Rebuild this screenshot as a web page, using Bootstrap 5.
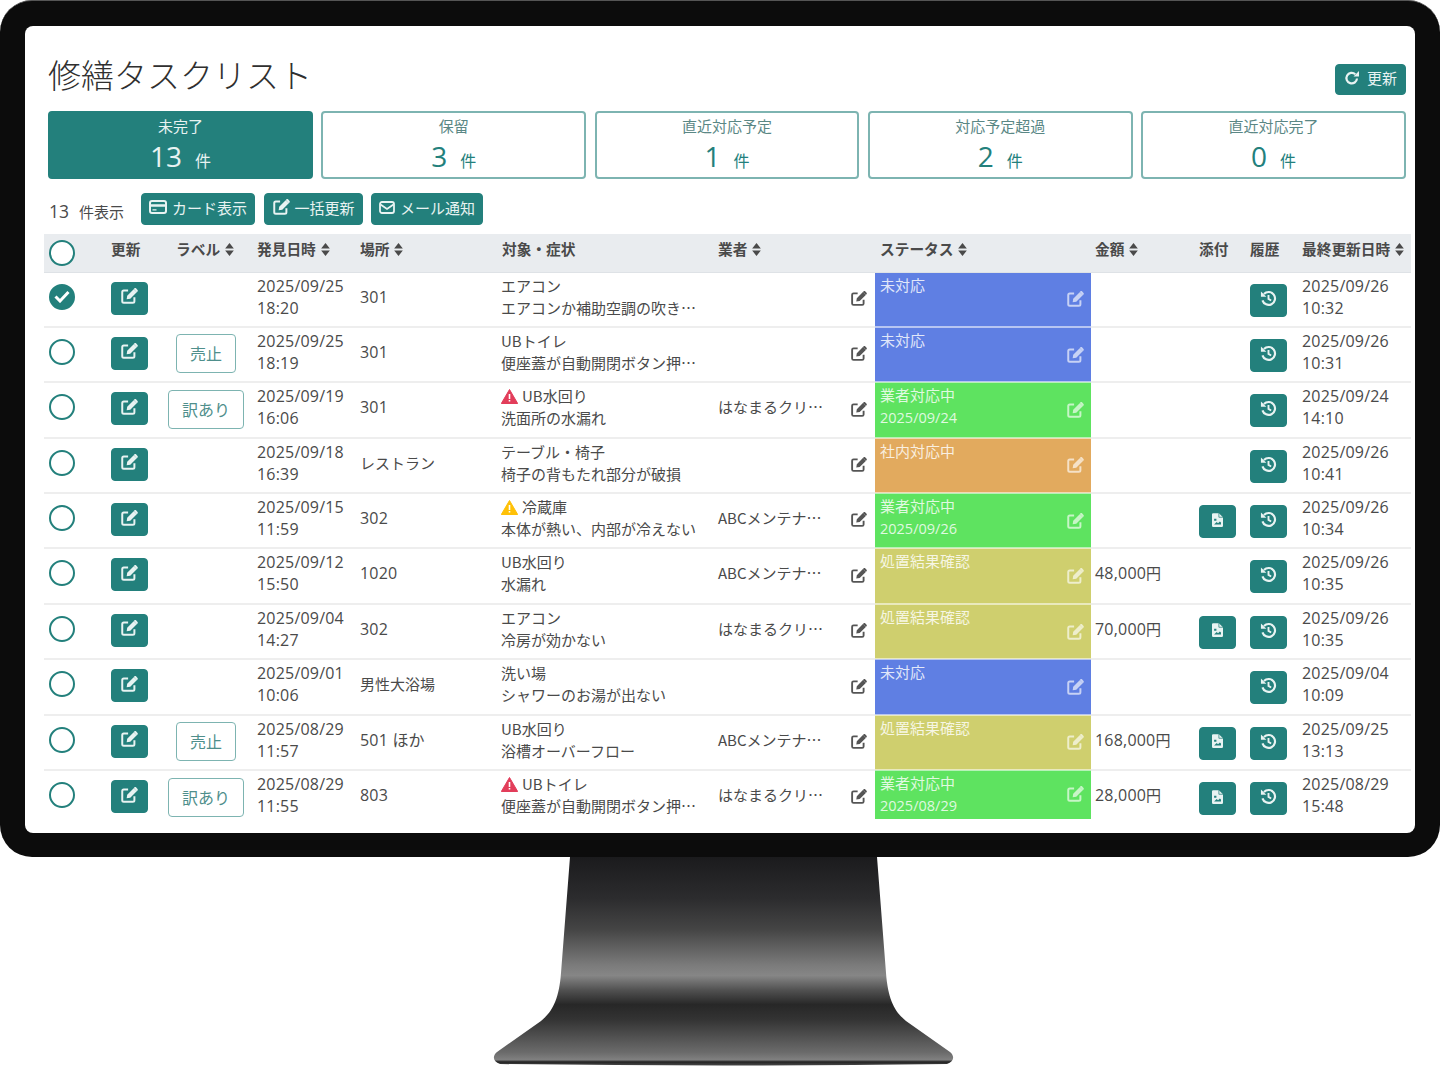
<!DOCTYPE html>
<html lang="ja">
<head>
    <meta charset="UTF-8">
    <title>修繕タスクリスト</title>
    <link href="https://cdn.jsdelivr.net/npm/bootstrap@5.3.2/dist/css/bootstrap.min.css" rel="stylesheet">
    <style>
        html, body { height: 100%; margin: 0; overflow: hidden; background: #fff; }
        body { font-family: "Noto Sans CJK JP", sans-serif; font-size: 15px; color: #4a4a4a; }
        .num { font-family: "Open Sans", "Noto Sans CJK JP", sans-serif; font-size: 16px; letter-spacing: .2px; }

        .monitor-frame { height: 857px; padding: 25px 25px 24px; background: #0c0c0c; border-radius: 32px; border-top: 1px solid #555; }
        .monitor-screen { height: 807px; padding: 0 9px 0 23px; background: #fff; border-radius: 8px; overflow: hidden; }
        .monitor-stand { display: block; width: 1440px; height: 213px; }

        .title-row { height: 85px; padding-top: 23px; }
        .page-title { font-size: 33px; font-weight: 300; line-height: 50px; margin: 0; color: #2f2f2f; }
        .btn-teal { --bs-btn-color: #e8f3f2; --bs-btn-bg: #23807c; --bs-btn-border-color: #23807c; --bs-btn-hover-color: #fff; --bs-btn-hover-bg: #1c6c69; --bs-btn-hover-border-color: #1c6c69; --bs-btn-font-size: 15px; --bs-btn-border-radius: 4px; --bs-btn-padding-x: 7px; --bs-btn-padding-y: 0; height: 32px; padding-bottom: 4px; display: inline-flex; align-items: center; gap: 5px; line-height: 1; }
        .refresh-btn { margin-top: 15px; height: 31px; gap: 7px; width: 71px; justify-content: center; }

        .stat-grid { display: grid; grid-template-columns: repeat(5, 1fr); gap: 8.5px; }
        .stat-box { height: 68px; border: 2px solid #7db4b1; border-radius: 4px; text-align: center; color: #5a8785; padding-top: 2px; }
        .stat-box.is-active { background: #23807c; border-color: #23807c; color: #e8f3f2; }
        .stat-label { line-height: 22px; }
        .stat-value { font-family: "Open Sans", sans-serif; font-size: 28px; line-height: 34px; margin-top: 2px; color: #23807c; }
        .is-active .stat-value { color: #e8f3f2; }
        .stat-unit { font-family: "Noto Sans CJK JP", sans-serif; font-size: 16px; margin-left: 13px; }

        .toolbar { height: 55px; padding-top: 14px; align-items: flex-start; gap: 8.5px; }
        .count-text { width: 84.5px; padding-top: 6px; line-height: 24px; margin-left: 1px; margin-right: -1px; white-space: nowrap; }
        .count-num { font-family: "Open Sans", sans-serif; font-size: 17.5px; margin-right: 10px; }

        .task-wrap { margin: 0 -5px 0 -4px; }
        .task-table { table-layout: fixed; width: 1367px; margin: 0; border-collapse: collapse; --bs-table-color: #4a4a4a; }
        .task-table col:nth-child(1) { width: 62px; }
        .task-table col:nth-child(2) { width: 58px; }
        .task-table col:nth-child(3) { width: 89px; }
        .task-table col:nth-child(4) { width: 103px; }
        .task-table col:nth-child(5) { width: 141px; }
        .task-table col:nth-child(6) { width: 217px; }
        .task-table col:nth-child(7) { width: 132px; }
        .task-table col:nth-child(8) { width: 29px; }
        .task-table col:nth-child(9) { width: 216px; }
        .task-table col:nth-child(10) { width: 104px; }
        .task-table col:nth-child(11) { width: 51px; }
        .task-table col:nth-child(12) { width: 52px; }
        .task-table col:nth-child(13) { width: 113px; }
        .task-table th { height: 38px; padding: 0 0 8px 4px; background: #e9ecef; font-weight: 700; font-size: 14.7px; color: #4a4a4a; white-space: nowrap; vertical-align: middle; border-bottom: 1px solid #dee2e6; }
        .task-table td { padding: 2px 0 7.4px 4px; line-height: 22px; vertical-align: middle; white-space: nowrap; border-bottom: 2px solid #eee; box-shadow: none; }
        .task-table tbody tr:last-child td { padding-bottom: 2px; border-bottom: 0; }
        .task-table td.status-cell { padding: 0; vertical-align: top; background: var(--status-bg); --bs-table-bg: var(--status-bg); border-bottom-color: rgba(255,255,255,.55); }
        .task-table th.th-wide { padding-left: 5px; }
        .task-table th.th-label { padding-left: 12px; }
        .task-table th.th-check { padding: 0 0 0 5px; }
        .task-table td.cell-first { padding-left: 5px; }
        .task-table td.cell-label { padding-left: 0; padding-right: 5px; text-align: center; }

        .status-blue { --status-bg: #5f7fe3; }
        .status-green { --status-bg: #5ee360; }
        .status-orange { --status-bg: #e2aa5e; }
        .status-yellow { --status-bg: #cfcf6e; }
        .status-inner { height: 53.4px; padding: 0 7px 0 5px; display: flex; justify-content: space-between; align-items: center; color: rgba(255,255,255,.82); }
        .status-inner svg { color: rgba(255,255,255,.65); }
        .task-table tbody tr:last-child .status-inner { height: 46px; }
        .status-text { align-self: flex-start; line-height: 22px; padding-top: 1px; }
        .status-date { font-size: 14.5px; font-family: "Open Sans", sans-serif; }

        .circle-check { width: 26px; height: 26px; border: 2px solid #23807c; border-radius: 50%; display: block; background: #fff; }
        .circle-check.is-on { background: #23807c; display: flex; align-items: center; justify-content: center; }
        .icon-btn { --bs-btn-padding-x: 0; width: 36.5px; height: 33px; justify-content: center; }
        .edit-btn { margin-top: 3px; }
        .side-btn { margin-top: 7px; }
        .tag-box { display: inline-block; border: 1.5px solid #7db4b1; border-radius: 4px; color: #4f8f8c; padding: 0 13px; height: 39px; line-height: 36px; font-size: 16px; margin-top: 4px; }
        .sort-mark { width: 9px; height: 13px; margin-left: 5px; vertical-align: -1px; }
        .pen-dark { color: #555; }
        .warn-mark { vertical-align: -2px; margin-right: 4px; }
    </style>
</head>
<body>
    <svg width="0" height="0" class="position-absolute">
        <symbol id="i-edit" viewBox="0 0 20 20">
            <path d="M9 4H4.2A1.7 1.7 0 0 0 2.5 5.7v10.1a1.7 1.7 0 0 0 1.7 1.7h10.1a1.7 1.7 0 0 0 1.7-1.7V11.5" fill="none" stroke="currentColor" stroke-width="2.2"/>
            <path d="M8 9.6 15.2 2.4l3.4 3.4-7.2 7.2-4 .6zM16.1 1.5c.5-.5 1.2-.5 1.7 0l1.7 1.7c.5.5.5 1.2 0 1.7l-.8.8-3.4-3.4z" fill="currentColor"/>
        </symbol>
        <symbol id="i-hist" viewBox="0 0 18 18">
            <path d="M4.2 4.2A6.8 6.8 0 1 1 2.6 11" fill="none" stroke="currentColor" stroke-width="2.3"/>
            <path d="M1 1.5v5.7h5.7z" fill="currentColor"/>
            <path d="M9 5.2v4.2l2.8 1.7" fill="none" stroke="currentColor" stroke-width="2"/>
        </symbol>
        <symbol id="i-file" viewBox="0 0 12 15">
            <path d="M1.3 0H7.5L12 4.5v9.2A1.3 1.3 0 0 1 10.700 15H1.3A1.300 1.300 0 0 1 0 13.700V1.300A1.300 1.300 0 0 1 1.300 0z" fill="currentColor"/>
            <path d="M2.300 6h2.500v2.300H2.300zM2.300 12.500l2.800-2.800 1.500 1.300 2-2 1.200 1.200v2.300z" fill="#23807c"/>
            <path d="M7.500 0v4.500H12" fill="none" stroke="#23807c" stroke-width=".8"/>
        </symbol>
        <symbol id="i-sort" viewBox="0 0 8 12">
            <path d="M4 0 8 5H0zM4 12 0 7h8z" fill="currentColor"/>
        </symbol>
    </svg>

    <div class="monitor-frame">
        <div class="monitor-screen">
            <div class="title-row d-flex justify-content-between align-items-start">
                <h1 class="page-title">修繕タスクリスト</h1>
                <button type="button" class="btn btn-teal refresh-btn">
                    <svg width="16" height="16" viewBox="0 0 16 16"><path d="M13 8.500A5.300 5.300 0 1 1 11.300 4.200" fill="none" stroke="currentColor" stroke-width="2.200"/><path d="M15 1v5.500H9.500z" fill="currentColor"/></svg>
                    更新
                </button>
            </div>

            <div class="stat-grid">
                <div class="stat-box is-active"><div class="stat-label">未完了</div><div class="stat-value">13<span class="stat-unit">件</span></div></div>
                <div class="stat-box"><div class="stat-label">保留</div><div class="stat-value">3<span class="stat-unit">件</span></div></div>
                <div class="stat-box"><div class="stat-label">直近対応予定</div><div class="stat-value">1<span class="stat-unit">件</span></div></div>
                <div class="stat-box"><div class="stat-label">対応予定超過</div><div class="stat-value">2<span class="stat-unit">件</span></div></div>
                <div class="stat-box"><div class="stat-label">直近対応完了</div><div class="stat-value">0<span class="stat-unit">件</span></div></div>
            </div>

            <div class="toolbar d-flex">
                <div class="count-text"><span class="count-num">13</span>件表示</div>
                <button type="button" class="btn btn-teal">
                    <svg width="18" height="14" viewBox="0 0 18 14"><rect x="1" y="1" width="16" height="12" rx="2" fill="none" stroke="currentColor" stroke-width="2"/><path d="M1 4.200h16v2.600H1zM3.500 9.200h4v1.300h-4z" fill="currentColor"/></svg>
                    カード表示
                </button>
                <button type="button" class="btn btn-teal">
                    <svg width="18" height="18"><use href="#i-edit"/></svg>
                    一括更新
                </button>
                <button type="button" class="btn btn-teal">
                    <svg width="16" height="13" viewBox="0 0 16 13"><rect x="1" y="1" width="14" height="11" rx="2" fill="none" stroke="currentColor" stroke-width="1.800"/><path d="M1.500 3.500 8 8l6.500-4.500" fill="none" stroke="currentColor" stroke-width="1.800"/></svg>
                    メール通知
                </button>
            </div>

            <div class="task-wrap">
                <table class="table task-table">
                    <colgroup><col><col><col><col><col><col><col><col><col><col><col><col><col></colgroup>
                    <thead>
                        <tr>
                            <th class="th-check"><span class="circle-check"></span></th>
                            <th class="th-wide">更新</th>
                            <th class="th-label">ラベル<svg class="sort-mark"><use href="#i-sort"/></svg></th>
                            <th>発見日時<svg class="sort-mark"><use href="#i-sort"/></svg></th>
                            <th>場所<svg class="sort-mark"><use href="#i-sort"/></svg></th>
                            <th class="th-wide">対象・症状</th>
                            <th>業者<svg class="sort-mark"><use href="#i-sort"/></svg></th>
                            <th></th>
                            <th class="th-wide">ステータス<svg class="sort-mark"><use href="#i-sort"/></svg></th>
                            <th>金額<svg class="sort-mark"><use href="#i-sort"/></svg></th>
                            <th>添付</th>
                            <th>履歴</th>
                            <th>最終更新日時<svg class="sort-mark"><use href="#i-sort"/></svg></th>
                        </tr>
                    </thead>
                    <tbody id="taskBody"></tbody>
                </table>
            </div>
        </div>
    </div>

    <svg class="monitor-stand" viewBox="0 857 1440 213">
        <defs>
            <linearGradient id="standFill" x1="0" y1="857" x2="0" y2="1065" gradientUnits="userSpaceOnUse">
                <stop offset="0" stop-color="#1b1b1d"/>
                <stop offset=".2" stop-color="#2c2c2e"/>
                <stop offset=".35" stop-color="#454545"/>
                <stop offset=".52" stop-color="#7b7b7b"/>
                <stop offset=".57" stop-color="#868686"/>
                <stop offset=".64" stop-color="#515151"/>
                <stop offset=".71" stop-color="#272727"/>
                <stop offset=".78" stop-color="#333"/>
                <stop offset=".94" stop-color="#6b6b6b"/>
                <stop offset=".975" stop-color="#808080"/>
                <stop offset=".985" stop-color="#222"/>
                <stop offset="1" stop-color="#444"/>
            </linearGradient>
        </defs>
        <path d="M570 857H877L886 973C888 1000 895 1012 906 1021L950 1052C955 1056 954 1062 947 1064Q723 1067 500 1064C493 1062 492 1056 497 1052L541 1021C552 1012 559 1000 561 973Z" fill="url(#standFill)"/>
    </svg>

    <script src="https://cdn.jsdelivr.net/npm/bootstrap@5.3.2/dist/js/bootstrap.bundle.min.js"></script>
    <script>
        (function() {
            const rows = [
                { on: true, found: ['2025/09/25', '18:20'], place: '301', target: 'エアコン', symptom: 'エアコンか補助空調の吹き…', vendor: '', status: 'blue', statusText: '未対応', last: ['2025/09/26', '10:32'] },
                { label: '売止', found: ['2025/09/25', '18:19'], place: '301', target: 'UBトイレ', symptom: '便座蓋が自動開閉ボタン押…', vendor: '', status: 'blue', statusText: '未対応', last: ['2025/09/26', '10:31'] },
                { label: '訳あり', found: ['2025/09/19', '16:06'], place: '301', warn: '#e23d5a', target: 'UB水回り', symptom: '洗面所の水漏れ', vendor: 'はなまるクリ…', status: 'green', statusText: '業者対応中', statusDate: '2025/09/24', last: ['2025/09/24', '14:10'] },
                { found: ['2025/09/18', '16:39'], place: 'レストラン', target: 'テーブル・椅子', symptom: '椅子の背もたれ部分が破損', vendor: '', status: 'orange', statusText: '社内対応中', last: ['2025/09/26', '10:41'] },
                { found: ['2025/09/15', '11:59'], place: '302', warn: '#ffc107', target: '冷蔵庫', symptom: '本体が熱い、内部が冷えない', vendor: 'ABCメンテナ…', status: 'green', statusText: '業者対応中', statusDate: '2025/09/26', file: true, last: ['2025/09/26', '10:34'] },
                { found: ['2025/09/12', '15:50'], place: '1020', target: 'UB水回り', symptom: '水漏れ', vendor: 'ABCメンテナ…', status: 'yellow', statusText: '処置結果確認', amount: '48,000', last: ['2025/09/26', '10:35'] },
                { found: ['2025/09/04', '14:27'], place: '302', target: 'エアコン', symptom: '冷房が効かない', vendor: 'はなまるクリ…', status: 'yellow', statusText: '処置結果確認', amount: '70,000', file: true, last: ['2025/09/26', '10:35'] },
                { found: ['2025/09/01', '10:06'], place: '男性大浴場', target: '洗い場', symptom: 'シャワーのお湯が出ない', vendor: '', status: 'blue', statusText: '未対応', last: ['2025/09/04', '10:09'] },
                { label: '売止', found: ['2025/08/29', '11:57'], place: '501 ほか', target: 'UB水回り', symptom: '浴槽オーバーフロー', vendor: 'ABCメンテナ…', status: 'yellow', statusText: '処置結果確認', amount: '168,000', file: true, last: ['2025/09/25', '13:13'] },
                { label: '訳あり', found: ['2025/08/29', '11:55'], place: '803', warn: '#e23d5a', target: 'UBトイレ', symptom: '便座蓋が自動開閉ボタン押…', vendor: 'はなまるクリ…', status: 'green', statusText: '業者対応中', statusDate: '2025/08/29', amount: '28,000', file: true, last: ['2025/08/29', '15:48'] }
            ];

            function icon(id, w, h) {
                return `<svg width="${w}" height="${h}"><use href="#${id}"/></svg>`;
            }

            function warnIcon(color) {
                return `<svg class="warn-mark" width="17" height="15" viewBox="0 0 17 15"><path d="M8.500.5 16.700 14.500H.3z" fill="${color}" stroke="${color}" stroke-linejoin="round"/><path d="M7.700 5h1.600v5H7.700zM7.700 11h1.600v1.600H7.700z" fill="#fff"/></svg>`;
            }

            function renderRow(row) {
                const check = row.on
                    ? '<span class="circle-check is-on"><svg width="16" height="13" viewBox="0 0 16 13"><path d="M1.500 6.500 6 11 14.500 2" fill="none" stroke="#fff" stroke-width="3"/></svg></span>'
                    : '<span class="circle-check"></span>';
                const statusDate = row.statusDate ? `<br><span class="status-date">${row.statusDate}</span>` : '';
                return `<tr>
                    <td class="cell-first">${check}</td>
                    <td class="cell-first"><button type="button" class="btn btn-teal icon-btn edit-btn">${icon('i-edit', 18, 18)}</button></td>
                    <td class="cell-label">${row.label ? `<span class="tag-box">${row.label}</span>` : ''}</td>
                    <td class="num">${row.found[0]}<br>${row.found[1]}</td>
                    <td><span class="${/^[0-9 ]/.test(row.place) ? 'num' : ''}">${row.place}</span></td>
                    <td>${row.warn ? warnIcon(row.warn) : ''}${row.target}<br>${row.symptom}</td>
                    <td>${row.vendor}</td>
                    <td class="pen-dark ps-1">${icon('i-edit', 17, 17)}</td>
                    <td class="status-cell status-${row.status}"><div class="status-inner"><div class="status-text">${row.statusText}${statusDate}</div>${icon('i-edit', 18, 18)}</div></td>
                    <td>${row.amount ? `<span class="num">${row.amount}</span>円` : ''}</td>
                    <td>${row.file ? `<button type="button" class="btn btn-teal icon-btn side-btn">${icon('i-file', 11, 14)}</button>` : ''}</td>
                    <td><button type="button" class="btn btn-teal icon-btn side-btn">${icon('i-hist', 17, 17)}</button></td>
                    <td class="num">${row.last[0]}<br>${row.last[1]}</td>
                </tr>`;
            }

            document.getElementById('taskBody').innerHTML = rows.map(renderRow).join('');
        })();
    </script>
</body>
</html>
